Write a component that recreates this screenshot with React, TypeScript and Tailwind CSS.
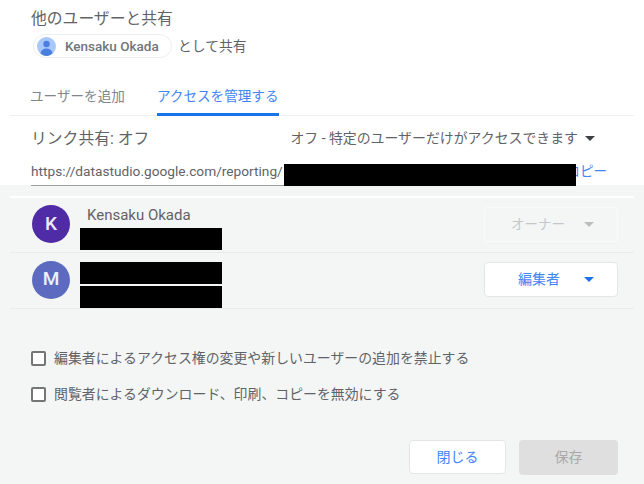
const FONT = "font-['Roboto','Noto_Sans_CJK_JP',sans-serif]"

function Caret({ className }: { className: string }) {
  return (
    <svg width="10" height="5" viewBox="0 0 10 5" className={className}>
      <path d="M0 0h10L5 5z" fill="currentColor" />
    </svg>
  )
}

function Redacted({ className }: { className: string }) {
  return <div className={`absolute bg-black ${className}`} />
}

function Avatar({ letter, color }: { letter: string; color: string }) {
  return (
    <div className={`flex h-[38px] w-[38px] shrink-0 items-center justify-center rounded-full text-[19px] font-medium text-white/90 ${color}`}>
      {letter}
    </div>
  )
}

function Check({ label }: { label: string }) {
  return (
    <label className="flex h-[16px] items-center">
      <span className="h-[15px] w-[15px] rounded-[2px] border-2 border-[#757575] bg-white" />
      <span className="ml-[8px] text-[13.9px] text-[#5f6368]">{label}</span>
    </label>
  )
}

export default function App() {
  return (
    <div className={`${FONT} relative h-[484px] w-[644px] overflow-hidden bg-[#f4f6f6]`}>
      {/* top section */}
      <div className="h-[185px] bg-white">
        <div className="pl-[31px] pt-[10px] text-[15.8px] leading-[18px] text-[#5f6368]">他のユーザーと共有</div>
        <div className="ml-[33px] mt-[6px] flex items-center">
          <div className="flex h-[24px] w-[139px] items-center rounded-full border border-[#eceff1] pl-[3px]">
            <svg width="19" height="19" viewBox="0 0 19 19">
              <circle cx="9.5" cy="9.5" r="9.5" fill="#a8c7fa" />
              <circle cx="9.5" cy="7" r="3.2" fill="#4a7fe0" />
              <path d="M3.5 16c.8-3 3-4.6 6-4.6s5.200 1.600 6 4.600c-1.500 1.900-3.600 3-6 3s-4.500-1.100-6-3z" fill="#4a7fe0" />
            </svg>
            <span className="ml-[9px] text-[13.5px] font-medium text-[#70757a]">Kensaku Okada</span>
          </div>
          <span className="ml-[6px] text-[13.8px] text-[#5f6368]">として共有</span>
        </div>

        <div className="mx-[10px] mt-[25px] flex h-[33px] items-start border-b border-[#eeeeee] pl-[20px]">
          <span className="pt-[3px] text-[13.6px] text-[#80868b]">ユーザーを追加</span>
          <span className="ml-[32px] h-[33px] border-b-[3px] border-[#1a73e8] pt-[3px] text-[13.6px] text-[#4285f4]">アクセスを管理する</span>
        </div>

        <div className="mt-[11px] flex items-center justify-between pl-[31px] pr-[49px]">
          <span className="text-[15.8px] text-[#5f6368]">リンク共有: オフ</span>
          <span className="flex items-center text-[13.9px] text-[#5f6368]">
            オフ - 特定のユーザーだけがアクセスできます
            <Caret className="ml-[7px] text-[#3c4043]" />
          </span>
        </div>

        <div className="mt-[10px] flex items-start pl-[31px] pr-[37px]">
          <div className="w-[520px] border-b border-[#9e9e9e] pb-[4px] text-[13.7px] leading-[20px] text-[#5f6368]">
            https://datastudio.google.com/reporting/
          </div>
          <span className="ml-auto text-[13.5px] leading-[20px] text-[#4285f4]">コピー</span>
        </div>
      </div>

      {/* members */}
      <div className="mx-[10px] mt-[11px] border-t-2 border-white">
        <div className="flex h-[55px] items-center border-b border-[#e8eaed] pb-[2px] pl-[22px] pr-[16px]">
          <Avatar letter="K" color="bg-[#4f2ba6]" />
          <div className="ml-[17px] -translate-y-[9px] text-[15px] text-[#5f6368]">Kensaku Okada</div>
          <div className="ml-auto flex h-[35px] w-[134px] items-center rounded-[4px] border border-dotted border-white pl-[26px] pr-[23px] text-[13.5px] text-[#c4c7c9]">
            オーナー
            <Caret className="ml-auto text-[#bdbdbd]" />
          </div>
        </div>
        <div className="flex h-[56px] items-center border-b border-[#e8eaed] pb-[2px] pl-[22px] pr-[16px]">
          <Avatar letter="M" color="bg-[#5c6bc0]" />
          <div className="ml-auto flex h-[35px] w-[134px] items-center rounded-[4px] border border-[#e3e5e8] bg-white pl-[33px] pr-[23px] text-[14px] text-[#4285f4]">
            編集者
            <Caret className="ml-auto text-[#1a73e8]" />
          </div>
        </div>
      </div>

      {/* options */}
      <div className="mt-[41px] flex flex-col gap-[20px] pl-[31px]">
        <Check label="編集者によるアクセス権の変更や新しいユーザーの追加を禁止する" />
        <Check label="閲覧者によるダウンロード、印刷、コピーを無効にする" />
      </div>

      {/* actions */}
      <div className="mt-[38px] flex justify-end gap-[13px] pr-[26px]">
        <button type="button" className="h-[34px] w-[97px] rounded-[4px] border border-[#e3e5e8] bg-white text-[14px] text-[#4285f4]">閉じる</button>
        <button type="button" className="h-[35px] w-[99px] rounded-[4px] bg-[#dfdfdf] text-[14px] text-[#a9a9a9]">保存</button>
      </div>

      {/* redaction bars */}
      <Redacted className="left-[284px] top-[164px] h-[22px] w-[292px]" />
      <Redacted className="left-[80px] top-[228px] h-[22px] w-[142px]" />
      <Redacted className="left-[80px] top-[262px] h-[22px] w-[142px]" />
      <Redacted className="left-[80px] top-[286px] h-[22px] w-[142px]" />
    </div>
  )
}
